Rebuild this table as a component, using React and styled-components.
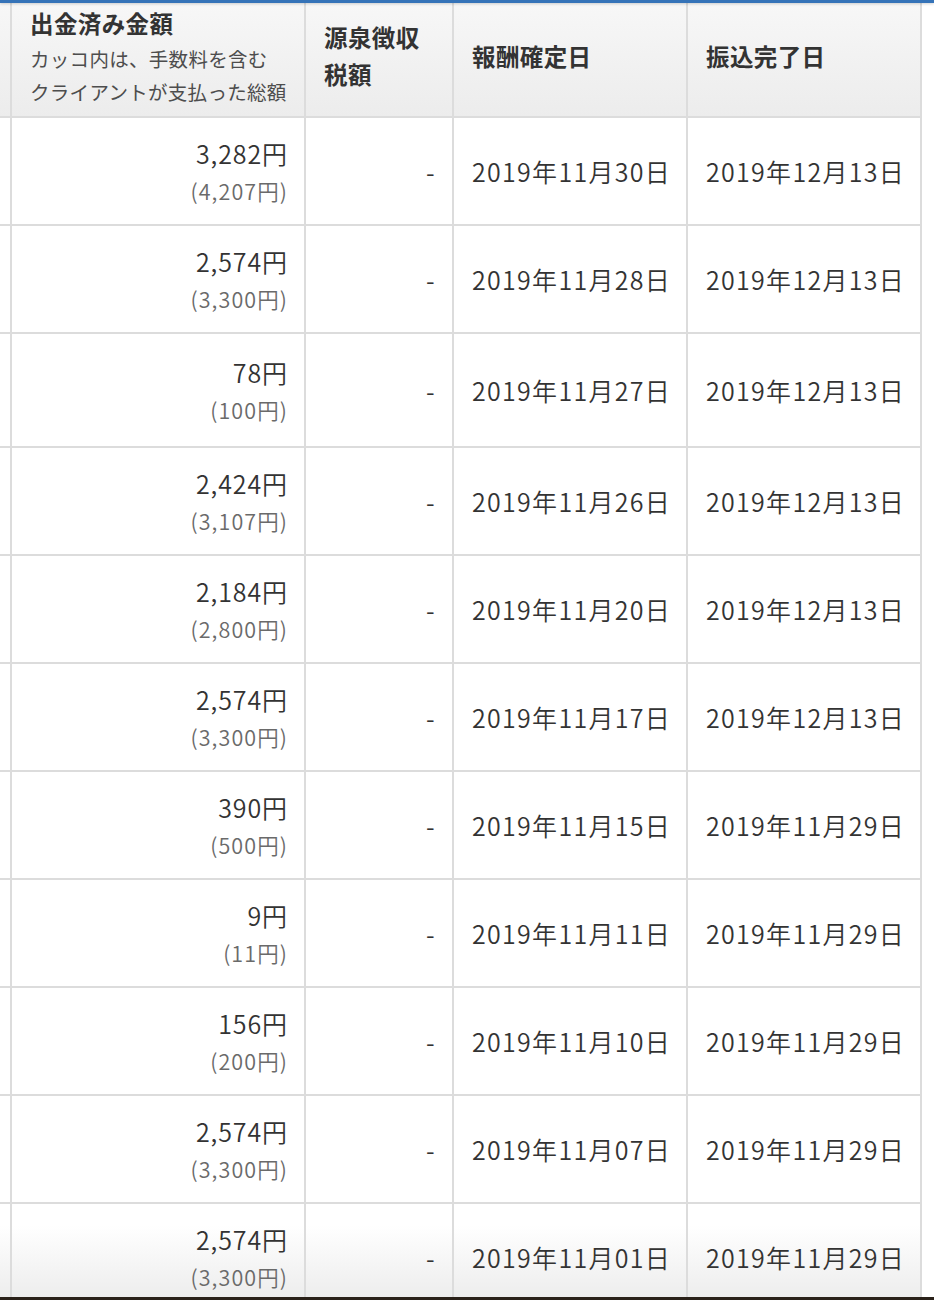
import React from "react";
import styled, { createGlobalStyle } from "styled-components";

const GlobalStyle = createGlobalStyle`
  * { box-sizing: border-box; }
  html, body { margin: 0; padding: 0; background: #fff; }
  body {
    font-family: "Noto Sans CJK JP", "Noto Sans", sans-serif;
    color: #333;
  }
`;

const rows = [
  { paid: "3,282円", total: "(4,207円)", fixed: "2019年11月30日", done: "2019年12月13日" },
  { paid: "2,574円", total: "(3,300円)", fixed: "2019年11月28日", done: "2019年12月13日" },
  { paid: "78円", total: "(100円)", fixed: "2019年11月27日", done: "2019年12月13日", tall: true },
  { paid: "2,424円", total: "(3,107円)", fixed: "2019年11月26日", done: "2019年12月13日" },
  { paid: "2,184円", total: "(2,800円)", fixed: "2019年11月20日", done: "2019年12月13日" },
  { paid: "2,574円", total: "(3,300円)", fixed: "2019年11月17日", done: "2019年12月13日" },
  { paid: "390円", total: "(500円)", fixed: "2019年11月15日", done: "2019年11月29日" },
  { paid: "9円", total: "(11円)", fixed: "2019年11月11日", done: "2019年11月29日" },
  { paid: "156円", total: "(200円)", fixed: "2019年11月10日", done: "2019年11月29日" },
  { paid: "2,574円", total: "(3,300円)", fixed: "2019年11月07日", done: "2019年11月29日" },
  { paid: "2,574円", total: "(3,300円)", fixed: "2019年11月01日", done: "2019年11月29日", faded: true },
];

const Page = styled.div`
  height: 1300px;
  display: flex;
  flex-direction: column;
  overflow: hidden;
`;

const TopBar = styled.div`
  height: 3px;
  flex: none;
  background: #3573b8;
  box-shadow: 0 1px 3px rgba(0, 0, 0, 0.18);
  position: relative;
  z-index: 1;
`;

const TableArea = styled.div`
  flex: 1;
  overflow: hidden;
`;

const BottomEdge = styled.div`
  height: 3px;
  flex: none;
  background: #2a2119;
`;

const Row = styled.div`
  display: grid;
  grid-template-columns: 12px 294px 148px 234px 234px;
  width: 922px;
  height: ${(p) => p.$height}px;
  background: ${(p) =>
    p.$head
      ? "linear-gradient(#f7f7f7, #ececec)"
      : p.$faded
      ? "linear-gradient(#ffffff 20%, #e9e9e9)"
      : "#fff"};
`;

const Cell = styled.div`
  border-right: 2px solid #dcdcdc;
  border-bottom: 2px solid #dcdcdc;
  padding: ${(p) => (p.$head ? "0 16px 8px 18px" : "0 16px 0 18px")};
  display: flex;
  flex-direction: column;
  justify-content: center;
  align-items: ${(p) => (p.$right ? "flex-end" : "flex-start")};
  text-align: ${(p) => (p.$right ? "right" : "left")};
  min-width: 0;
`;

const EdgeCell = styled.div`
  border-right: 2px solid #dcdcdc;
  border-bottom: 2px solid #dcdcdc;
`;

const HeadTitle = styled.div`
  font-size: 23.5px;
  font-weight: 700;
  letter-spacing: 0.4px;
  line-height: ${(p) => p.$lh || 38}px;
  color: #333;
  white-space: nowrap;
`;

const HeadNote = styled.div`
  font-size: 19.5px;
  line-height: 33px;
  letter-spacing: 0.3px;
  color: #4d4d4d;
  white-space: nowrap;
`;

const Amount = styled.div`
  font-size: 25px;
  font-weight: 350;
  letter-spacing: 0.9px;
  line-height: 36px;
  color: #333;
  padding-top: 3px;
`;

const Gross = styled.div`
  font-size: 21.5px;
  font-weight: 350;
  letter-spacing: 1.1px;
  line-height: 40px;
  color: #6a6a6a;
`;

const Plain = styled.div`
  font-size: 25px;
  font-weight: 350;
  letter-spacing: 1.3px;
  line-height: 36px;
  color: #333;
  white-space: nowrap;
`;

export default function App() {
  return (
    <Page>
      <GlobalStyle />
      <TopBar />
      <TableArea>
        <Row $head $height={115}>
          <EdgeCell />
          <Cell $head>
            <HeadTitle>出金済み金額</HeadTitle>
            <HeadNote>カッコ内は、手数料を含む</HeadNote>
            <HeadNote>クライアントが支払った総額</HeadNote>
          </Cell>
          <Cell $head>
            <HeadTitle $lh={37}>源泉徴収</HeadTitle>
            <HeadTitle $lh={37}>税額</HeadTitle>
          </Cell>
          <Cell $head>
            <HeadTitle>報酬確定日</HeadTitle>
          </Cell>
          <Cell $head>
            <HeadTitle>振込完了日</HeadTitle>
          </Cell>
        </Row>
        {rows.map((r, i) => (
          <Row key={i} $height={r.tall ? 114 : 108} $faded={r.faded}>
            <EdgeCell />
            <Cell $right>
              <Amount>{r.paid}</Amount>
              <Gross>{r.total}</Gross>
            </Cell>
            <Cell $right>
              <Plain>-</Plain>
            </Cell>
            <Cell>
              <Plain>{r.fixed}</Plain>
            </Cell>
            <Cell>
              <Plain>{r.done}</Plain>
            </Cell>
          </Row>
        ))}
      </TableArea>
      <BottomEdge />
    </Page>
  );
}
